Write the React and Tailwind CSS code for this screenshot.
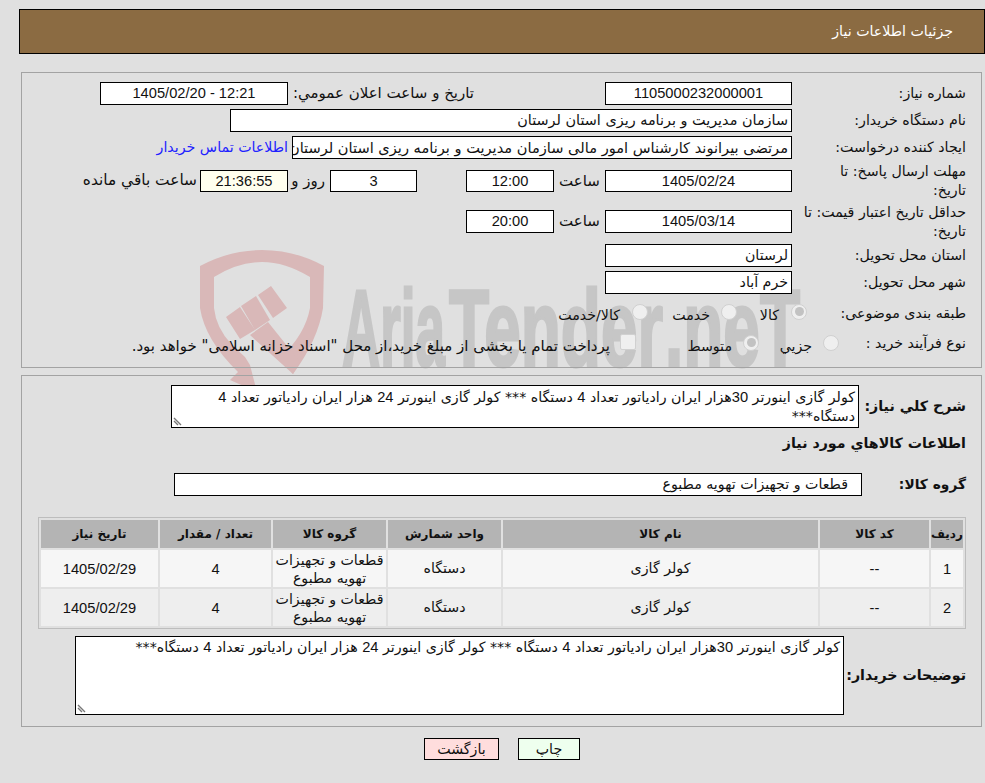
import React from "react";

const field = "h-full bg-white border border-black text-center leading-[21px] overflow-hidden whitespace-nowrap";
const fieldRight = "h-full bg-white border border-black px-[3px] leading-[21px] overflow-hidden whitespace-nowrap";
const num = "font-['Liberation_Sans',sans-serif] text-[14.67px]";
const logoText = {
  fontFamily: "'Liberation Sans', sans-serif",
  fontWeight: 700,
  fontSize: 110,
  fill: "#c6c6c6",
  stroke: "#c6c6c6",
  strokeWidth: 3,
  lengthAdjust: "spacingAndGlyphs",
};

function N({ children }) {
  return <span className={num}>{children}</span>;
}

function Row({ label, h = "h-[23px]", mt, labelW = "w-[174px]", children }) {
  return (
    <div className={`flex items-center ${h} ${mt}`}>
      <div className={`${labelW} shrink-0 leading-[19px] whitespace-nowrap`}>{label}</div>
      {children}
    </div>
  );
}

function Radio({ checked, mb }) {
  return (
    <span className={`w-[16px] h-[16px] rounded-full border border-[#d0d0d0] bg-[#efefef] flex items-center justify-center shrink-0 ${mb}`}>
      {checked && <span className="w-[9px] h-[9px] rounded-full bg-[#c2c2c2]" />}
    </span>
  );
}

function Grip() {
  return (
    <svg className="absolute left-[1px] bottom-[1px]" width="11" height="11" viewBox="0 0 11 11">
      <path d="M1 3 L8 10 M1 6 L5 10" stroke="#777" strokeWidth="1.4" />
    </svg>
  );
}

// logo behind the form
function Watermark() {
  return (
    <svg className="absolute left-0 top-0 pointer-events-none [direction:ltr]" width="985" height="783" viewBox="0 0 985 783">
      <path
        d="M200 266 Q230 250 262 250 Q295 250 324 266 L323 308 Q318 340 293 374 L280 358 Q305 335 310 308 L310 277 Q285 262 262 262 Q238 262 214 277 L214 308 Q216 328 232 345 L245 357 L250 365 L257 392 L230 380 L238 372 Q205 340 200 308 Z"
        fill="#d9b8b8"
      />
      <path
        d="M226 317 L240 307 L255 330 L240 339 Z M241 306 L256 296 L270 320 L255 330 Z M258 295 L271 286 L287 308 L273 318 Z M250 335 L268 322 L300 362 L293 374 Z"
        fill="#d9b8b8"
      />
      <text x="342" y="366" textLength="103" {...logoText}>Aria</text>
      <text x="449" y="366" textLength="214" {...logoText}>Tender</text>
      <text x="665" y="366" textLength="135" {...logoText}>.neT</text>
    </svg>
  );
}

const rows = [
  { no: "1", name: "كولر گازی" },
  { no: "2", name: "كولر گازی" },
];

const cols = ["w-[32px]", "w-[109px]", "w-[315px]", "w-[113px]", "w-[113px]", "w-[111px]", "w-[117px]"];

const desc = (
  <>
    كولر گازی اینورتر <N>30</N>هزار ایران رادیاتور تعداد <N>4</N> دستگاه *** كولر گازی اینورتر <N>24</N> هزار ایران رادیاتور تعداد <N>4</N> دستگاه***
  </>
);

export default function App() {
  return (
    <div
      dir="rtl"
      className="relative w-[985px] h-[783px] bg-[#e0e0e0] text-[14.2px] text-[#111] overflow-hidden font-['DejaVu_Sans',sans-serif]"
    >
      <Watermark />

      <div className="relative pt-[9px] pl-[19px]">
        <div className="h-[45px] bg-[#8b6b42] border border-black flex items-center text-white pr-[31px]">
          جزئیات اطلاعات نیاز
        </div>

        <div className="mt-[18px] ml-[2px] mr-[3px] h-[296px] border border-[#a3a3a3] pt-[9px] pr-[15px]">
          <Row label="شماره نیاز:">
            <div className={`${field} ${num} w-[187px]`}>1105000232000001</div>
            <div className="w-[131px] shrink-0" />
            <div className="w-[186px] shrink-0 whitespace-nowrap text-[15px]">تاریخ و ساعت اعلان عمومي:</div>
            <div dir="ltr" className={`${field} ${num} w-[188px]`}>1405/02/20 - 12:21</div>
          </Row>
          <Row label="نام دستگاه خریدار:" mt="mt-[4px]">
            <div className={`${fieldRight} w-[562px] text-[14.4px]`}>سازمان مدیریت و برنامه ریزی استان لرستان</div>
          </Row>
          <Row label="ایجاد کننده درخواست:" mt="mt-[4px]">
            <div className={`${fieldRight} w-[500px] text-[14.6px]`}>مرتضی بیرانوند کارشناس امور مالی سازمان مدیریت و برنامه ریزی استان لرستان</div>
            <a className="mr-[4px] text-[#2020ff] whitespace-nowrap">اطلاعات تماس خریدار</a>
          </Row>
          <Row label={<span>مهلت ارسال پاسخ: تا<br />تاریخ:</span>} h="h-[22px]" mt="mt-[11px]">
            <div className={`${field} ${num} w-[187px]`}>1405/02/24</div>
            <div className="w-[51px] text-center shrink-0 text-[15px]">ساعت</div>
            <div className={`${field} ${num} w-[88px]`}>12:00</div>
            <div className="w-[49px] shrink-0" />
            <div className={`${field} ${num} w-[87px]`}>3</div>
            <div className="w-[37px] mr-[5px] shrink-0 text-[15px] whitespace-nowrap">روز و</div>
            <div className={`h-full bg-[#ffffee] border border-black text-center leading-[21px] ${num} w-[88px]`}>21:36:55</div>
            <div className="mr-[3px] whitespace-nowrap text-[15.4px]">ساعت باقي مانده</div>
          </Row>
          <Row label={<span>حداقل تاریخ اعتبار قیمت: تا<br />تاریخ:</span>} mt="mt-[18px]">
            <div className={`${field} ${num} w-[187px]`}>1405/03/14</div>
            <div className="w-[51px] text-center shrink-0 text-[15px]">ساعت</div>
            <div className={`${field} ${num} w-[88px]`}>20:00</div>
          </Row>
          <Row label="استان محل تحویل:" mt="mt-[11px]">
            <div className={`${fieldRight} w-[187px]`}>لرستان</div>
          </Row>
          <Row label="شهر محل تحویل:" mt="mt-[4px]">
            <div className={`${fieldRight} w-[187px]`}>خرم آباد</div>
          </Row>
          <Row label="طبقه بندی موضوعی:" labelW="w-[159px]" mt="mt-[8px]">
            <Radio checked mb="mb-[4px]" />
            <span className="w-[42px] mr-[12px] pt-[4px] shrink-0">كالا</span>
            <Radio mb="mb-[4px]" />
            <span className="w-[62px] mr-[11px] pt-[4px] shrink-0">خدمت</span>
            <Radio mb="mb-[4px]" />
            <span className="mr-[12px] pt-[4px] whitespace-nowrap">كالا/خدمت</span>
          </Row>
          <Row label="نوع فرآیند خرید :" labelW="w-[127px]" mt="mt-[7px]">
            <Radio mb="mb-[2px]" />
            <span className="w-[53px] mr-[11px] pt-[6px] shrink-0">جزیي</span>
            <Radio checked mb="mb-[2px]" />
            <span className="w-[96px] mr-[11px] pt-[6px] shrink-0">متوسط</span>
            <span className="w-[16px] h-[16px] rounded-[2px] border border-[#d0d0d0] bg-[#efefef] shrink-0 mb-[3px]" />
            <span className="mr-[10px] pt-[6px] whitespace-nowrap text-[15px]">پرداخت تمام یا بخشی از مبلغ خرید،از محل "اسناد خزانه اسلامی" خواهد بود.</span>
          </Row>
        </div>

        <div className="mt-[7px] ml-[2px] mr-[3px] h-[352px] border border-[#a3a3a3] pt-[9px] pr-[15px]">
          <div className="flex items-center h-[43px]">
            <div className="w-[107px] shrink-0 font-bold">شرح كلي نياز:</div>
            <div className="relative w-[688px] h-full bg-white border border-black px-[3px] pt-[2px] leading-[19px]">
              {desc}
              <Grip />
            </div>
          </div>
          <div className="mt-[5px] h-[21px] font-bold leading-[21px]">اطلاعات كالاهاي مورد نياز</div>
          <div className="flex items-center h-[23px] mt-[19px]">
            <div className="w-[104px] shrink-0 font-bold text-[13.8px]">گروه كالا:</div>
            <div className="h-full w-[688px] bg-white border border-black pr-[13px] leading-[21px] whitespace-nowrap">قطعات و تجهیزات تهویه مطبوع</div>
          </div>

          <table className="mt-[21px] w-[928px] border border-[#bdbdbd] border-separate border-spacing-[2px] table-fixed text-center">
            <thead>
              <tr className="h-[28px] bg-[#b4b4b4] font-bold text-[12px]">
                <th className={cols[0]}>ردیف</th>
                <th className={cols[1]}>كد كالا</th>
                <th className={cols[2]}>نام كالا</th>
                <th className={cols[3]}>واحد شمارش</th>
                <th className={cols[4]}>گروه كالا</th>
                <th className={cols[5]}>تعداد / مقدار</th>
                <th className={cols[6]}>تاریخ نیاز</th>
              </tr>
            </thead>
            <tbody>
              {rows.map((r, i) => (
                <tr key={r.no} className={`h-[37px] ${i === 0 ? "bg-[#f6f6f6]" : "bg-[#eeeeee]"}`}>
                  <td className={num}>{r.no}</td>
                  <td className={num}>--</td>
                  <td>{r.name}</td>
                  <td>دستگاه</td>
                  <td className="leading-[18px]">قطعات و تجهیزات<br />تهویه مطبوع</td>
                  <td className={num}>4</td>
                  <td className={num}>1405/02/29</td>
                </tr>
              ))}
            </tbody>
          </table>

          <div className="flex items-center h-[79px] mt-[7px]">
            <div className="w-[122px] shrink-0 font-bold">توضیحات خریدار:</div>
            <div className="relative w-[769px] h-full bg-white border border-black px-[3px] pt-[1px] leading-[19px]">
              {desc}
              <Grip />
            </div>
          </div>
        </div>

        <div className="mt-[11px] flex justify-center gap-[19px]">
          <button className="w-[62px] h-[22px] bg-[#eeffee] border border-black">چاپ</button>
          <button className="w-[75px] h-[22px] bg-[#ffdddd] border border-black">بازگشت</button>
        </div>
      </div>
    </div>
  );
}
